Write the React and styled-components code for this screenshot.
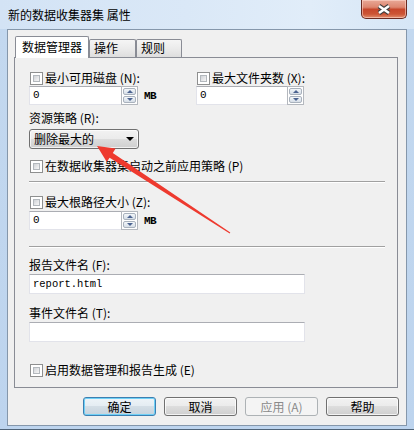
import React from "react";
import styled, { createGlobalStyle } from "styled-components";

const ui = `"Noto Sans CJK SC", "Noto Sans", sans-serif`;
const mono = `"Liberation Mono", "DejaVu Sans Mono", monospace`;

const GlobalStyle = createGlobalStyle`
  html, body { margin: 0; padding: 0; background: #fff; }
  body { font-family: ${ui}; font-size: 12px; color: #000; }
  * { box-sizing: border-box; }
`;

export default function App() {
  return (
    <>
      <GlobalStyle />
      <Window>
        <TitleBar>
          <Title>新的数据收集器集 属性</Title>
          <CloseButton>
            <svg width="14" height="11" viewBox="0 0 14 11">
              <path d="M2 2 L12 9 M12 2 L2 9" stroke="#3d3d3d" strokeWidth="4.6" />
              <path d="M2 2 L12 9 M12 2 L2 9" stroke="#fff" strokeWidth="2.6" />
            </svg>
          </CloseButton>
        </TitleBar>

        <Client>
          <TabStrip>
            <Tab $active $w={74}>数据管理器</Tab>
            <Tab $w={47}>操作</Tab>
            <Tab $w={46}>规则</Tab>
          </TabStrip>

          <Panel>
            <TwoCols>
              <Col>
                <CheckItem label="最小可用磁盘 (N):" />
                <Spin value="0" width={92} unit="MB" />
              </Col>
              <Col>
                <CheckItem label="最大文件夹数 (X):" />
                <Spin value="0" width={91} />
              </Col>
            </TwoCols>

            <FieldLabel $mt={6}>资源策略 (R):</FieldLabel>
            <Combo $mt={4}>
              删除最大的
              <ComboArrow />
            </Combo>

            <CheckItem mt={10} label="在数据收集器集启动之前应用策略 (P)" />
            <Separator $mt={8} />

            <CheckItem mt={12} label="最大根路径大小 (Z):" />
            <Spin mt={2} value="0" width={92} unit="MB" />
            <Separator $mt={16} />

            <FieldLabel $mt={10}>报告文件名 (F):</FieldLabel>
            <TextBox $mt={2}>report.html</TextBox>

            <FieldLabel $mt={12}>事件文件名 (T):</FieldLabel>
            <TextBox $mt={2} />

            <CheckItem mt={21} label="启用数据管理和报告生成 (E)" />
          </Panel>

          <ButtonRow>
            <Button $variant="default">确定</Button>
            <Button>取消</Button>
            <Button $variant="disabled">应用 (A)</Button>
            <Button>帮助</Button>
          </ButtonRow>
        </Client>

        <Arrow viewBox="0 0 414 430" width="414" height="430">
          <polygon
            fill="#ee3a2f"
            points="97,146 115.6,148.6 112.8,152.9 230.3,232.5 229.7,233.5 109.6,157.8 106.8,162"
          />
        </Arrow>
      </Window>
    </>
  );
}

function CheckItem({ label, mt = 0 }) {
  return (
    <CheckLine $mt={mt}>
      <CheckBox />
      <span>{label}</span>
    </CheckLine>
  );
}

function Spin({ value, width, unit, mt = 0 }) {
  return (
    <SpinLine $mt={mt}>
      <SpinText $w={width}>{value}</SpinText>
      <SpinButtons>
        <SpinBtn>
          <Tri $up />
        </SpinBtn>
        <SpinBtn>
          <Tri />
        </SpinBtn>
      </SpinButtons>
      {unit ? <Unit>{unit}</Unit> : null}
    </SpinLine>
  );
}

const Window = styled.div`
  position: relative;
  width: 414px;
  height: 430px;
  display: flex;
  flex-direction: column;
  background: linear-gradient(180deg, #d6e6f6 0%, #cfe1f3 28px, #c3d8ef 29px, #bdd4ee 100%);
  border-bottom: 1px solid #4f6378;
  overflow: hidden;
`;

const TitleBar = styled.div`
  height: 29px;
  flex: none;
  display: flex;
  align-items: flex-start;
  padding-left: 8px;
  background: linear-gradient(90deg, #d3e3f5 0%, #dae8f7 45%, #e1edf9 75%, #d6e6f6 100%);
`;

const Title = styled.div`
  margin-top: 8px;
  line-height: 14px;
  font-size: 12px;
  color: #000;
`;

const CloseButton = styled.div`
  margin-left: auto;
  margin-right: 7px;
  width: 46px;
  height: 19px;
  display: flex;
  align-items: center;
  justify-content: center;
  border: 1px solid #6a2b22;
  border-top: none;
  border-radius: 0 0 5px 5px;
  background: linear-gradient(
    180deg,
    #e9a897 0%,
    #dd8670 40%,
    #c7472c 52%,
    #cc5535 78%,
    #e28e6e 100%
  );
  box-shadow: inset 0 0 0 1px rgba(255, 220, 210, 0.55);
`;

const Client = styled.div`
  flex: 1;
  margin: 0 7px 4px 7px;
  border: 1px solid #8597ab;
  background: #f0f0f0;
  display: flex;
  flex-direction: column;
  padding-bottom: 9px;
`;

const TabStrip = styled.div`
  display: flex;
  align-items: flex-end;
  margin: 6px 0 -1px 7px;
  position: relative;
  z-index: 1;
`;

const Tab = styled.div`
  width: ${(p) => p.$w}px;
  height: ${(p) => (p.$active ? 22 : 18)}px;
  margin-bottom: ${(p) => (p.$active ? 0 : 1)}px;
  padding: ${(p) => (p.$active ? "3px 0 0 6px" : "1px 0 0 4px")};
  line-height: 14px;
  font-size: 12px;
  white-space: nowrap;
  border: 1px solid #898c95;
  border-bottom: none;
  border-radius: 2px 2px 0 0;
  background: ${(p) =>
    p.$active ? "#fff" : "linear-gradient(180deg, #f5f5f5 0%, #ebebeb 50%, #dedede 100%)"};
`;

const Panel = styled.div`
  height: 331px;
  margin: 0 8px 0 6px;
  border: 1px solid #898c95;
  background: #f0f0f0;
  padding: 13px 0 0 14px;
  display: flex;
  flex-direction: column;
  align-items: flex-start;
`;

const TwoCols = styled.div`
  display: grid;
  grid-template-columns: 167px auto;
`;

const Col = styled.div`
  display: flex;
  flex-direction: column;
  gap: 1px;
`;

const CheckLine = styled.div`
  display: flex;
  align-items: center;
  gap: 2px;
  height: 14px;
  line-height: 14px;
  padding-left: 1px;
  margin-top: ${(p) => p.$mt}px;
  white-space: nowrap;
`;

const CheckBox = styled.span`
  position: relative;
  width: 13px;
  height: 13px;
  flex: none;
  border: 1px solid #8e8f8f;
  background: #fff;

  &::after {
    content: "";
    position: absolute;
    inset: 2px;
    border: 1px solid #b3b8bd;
    background: linear-gradient(135deg, #cfd2d6 0%, #e6e7e9 55%, #f6f6f6 100%);
  }
`;

const FieldLabel = styled.div`
  height: 14px;
  line-height: 14px;
  margin-top: ${(p) => p.$mt}px;
  white-space: nowrap;
`;

const SpinLine = styled.div`
  display: flex;
  align-items: center;
  margin-top: ${(p) => p.$mt}px;
`;

const SpinText = styled.div`
  width: ${(p) => p.$w}px;
  height: 19px;
  padding-left: 3px;
  font-family: ${mono};
  font-size: 11px;
  line-height: 17px;
  background: #fff;
  border: 1px solid #e2e3ea;
  border-top-color: #abadb3;
  border-right: none;
`;

const SpinButtons = styled.div`
  width: 17px;
  height: 19px;
  display: flex;
  flex-direction: column;
  gap: 1px;
  padding: 1px;
  background: #fff;
  border: 1px solid #b4b8be;
`;

const SpinBtn = styled.div`
  flex: 1;
  display: flex;
  align-items: center;
  justify-content: center;
  border: 1px solid #a9b2bd;
  border-radius: 2px;
  background: linear-gradient(180deg, #f4f7fa 0%, #e4eaf0 50%, #d6dee7 100%);
`;

const Tri = styled.span`
  width: 0;
  height: 0;
  border-left: 3px solid transparent;
  border-right: 3px solid transparent;
  ${(p) =>
    p.$up ? "border-bottom: 3px solid #4b6390;" : "border-top: 3px solid #4b6390;"}
`;

const Unit = styled.span`
  margin-left: 6px;
  font-family: ${mono};
  font-size: 11px;
  font-weight: bold;
  letter-spacing: -0.5px;
  line-height: 14px;
`;

const Combo = styled.div`
  position: relative;
  width: 110px;
  height: 20px;
  margin-top: ${(p) => p.$mt}px;
  padding-left: 4px;
  line-height: 18px;
  border: 1px solid #707070;
  border-radius: 3px;
  background: linear-gradient(180deg, #f2f2f2 0%, #ebebeb 49%, #dddddd 50%, #cfcfcf 100%);
  box-shadow: inset 0 0 0 1px rgba(255, 255, 255, 0.7);
  display: flex;
  align-items: center;
  white-space: nowrap;
`;

const ComboArrow = styled.span`
  margin-left: auto;
  margin-right: 4px;
  width: 0;
  height: 0;
  border-left: 4px solid transparent;
  border-right: 4px solid transparent;
  border-top: 4px solid #000;
`;

const Separator = styled.div`
  width: 356px;
  height: 2px;
  margin-top: ${(p) => p.$mt}px;
  border-top: 1px solid #a0a0a0;
  border-bottom: 1px solid #fff;
`;

const TextBox = styled.div`
  width: 276px;
  height: 20px;
  margin-top: ${(p) => p.$mt}px;
  padding-left: 3px;
  font-family: ${mono};
  font-size: 10.5px;
  line-height: 18px;
  background: #fff;
  border: 1px solid #e2e3ea;
  border-top-color: #abadb3;
`;

const ButtonRow = styled.div`
  display: flex;
  justify-content: flex-end;
  gap: 8px;
  margin-top: 9px;
  padding-right: 7px;
`;

const buttonLooks = {
  normal: `
    border-color: #707070;
    background: linear-gradient(180deg, #f2f2f2 0%, #ebebeb 49%, #dddddd 50%, #cfcfcf 100%);
    box-shadow: inset 0 0 0 1px rgba(255,255,255,0.75);
    color: #000;
  `,
  default: `
    border-color: #3c7fb1;
    background: linear-gradient(180deg, #eef4f8 0%, #e4ecf2 49%, #d4dee6 50%, #c6d3dd 100%);
    box-shadow: inset 0 0 0 1px #6fd0f6;
    color: #000;
  `,
  disabled: `
    border-color: #adb2b5;
    background: #f4f4f4;
    color: #8a8a8a;
  `,
};

const Button = styled.div`
  width: 73px;
  height: 19px;
  border: 1px solid;
  border-radius: 3px;
  display: flex;
  align-items: center;
  justify-content: center;
  line-height: 14px;
  white-space: nowrap;
  ${(p) => buttonLooks[p.$variant || "normal"]}
`;

const Arrow = styled.svg`
  position: absolute;
  left: 0;
  top: 0;
  pointer-events: none;
`;
